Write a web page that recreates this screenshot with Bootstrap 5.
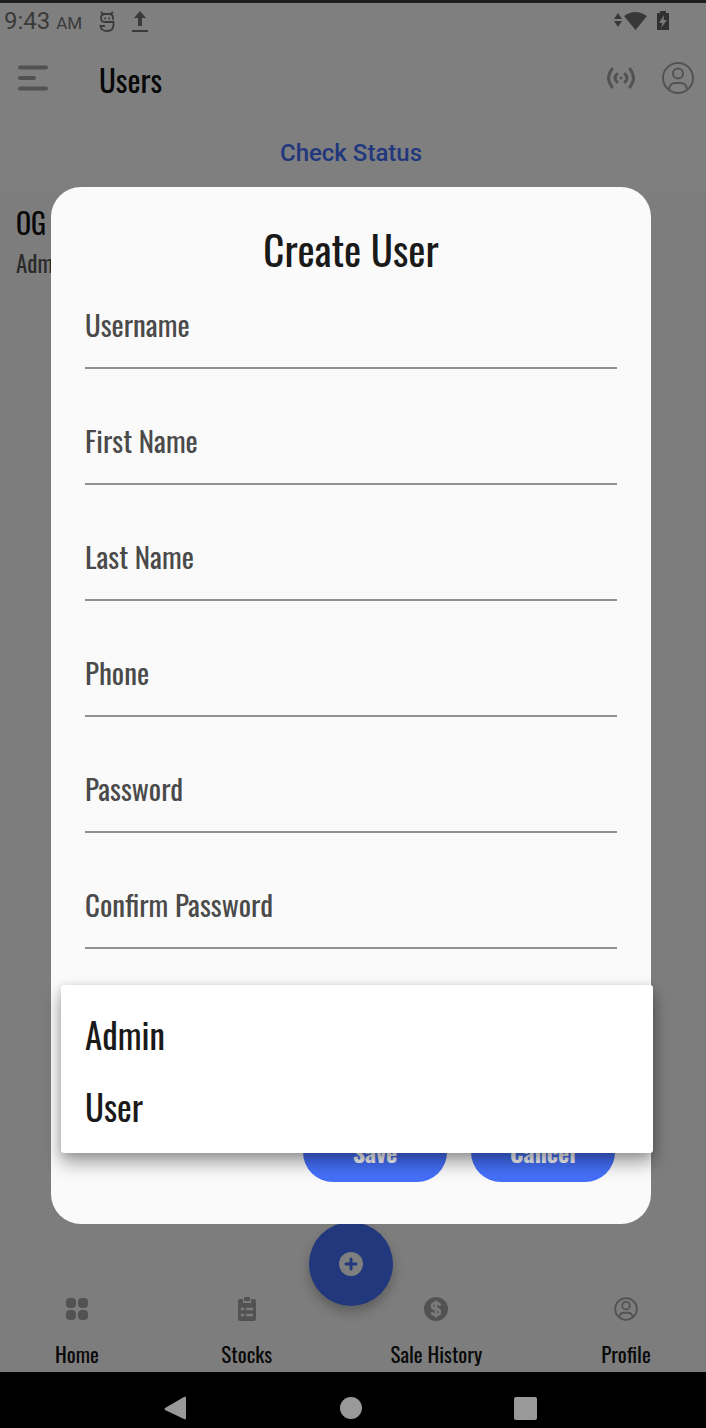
<!DOCTYPE html>
<html lang="en">
<head>
<meta charset="utf-8">
<meta name="viewport" content="width=device-width, initial-scale=1">
<title>Users</title>
<link href="https://cdn.jsdelivr.net/npm/bootstrap@5.3.0/dist/css/bootstrap.min.css" rel="stylesheet">
<style>
  :root { --brand: #4570fa; --ink: #1a1a1a; --muted: #a4a4a4; --signal: #707070; }
  body { font-family: Oswald, "Liberation Sans Narrow", "DejaVu Sans Condensed", sans-serif; color: #111; background: #000; }
  .roboto { font-family: Roboto, sans-serif; }
  .app { background: #fafafa; }
  .bars { background: #fff; }
  .status { border-top: 3px solid #3c3c3c; height: 40px; padding: 0 36px 0 4px; color: #757575; }
  .clock { font-size: 24px; line-height: 36px; }
  .clock small { font-size: 17px; }
  .appbar { height: 77px; padding: 0 12px 2px 18px; color: var(--muted); }
  .appbar h1 { font-size: 31px; line-height: 40px; margin: 3px 0 0 51px; color: #111; }
  .appbar a { color: inherit; margin-left: 27px; }
  .check { height: 75px; padding: 18px 4px 0 0; }
  .check .btn { color: var(--brand); font: 500 24px/36px Roboto, sans-serif; }
  .person { padding: 11px 16px; }
  .person-name { font-size: 28px; line-height: 40px; }
  .person-role { font-size: 23px; line-height: 40px; color: #555; }
  .fab { width: 84px; height: 84px; background: var(--brand); border: 0; box-shadow: 0 6px 12px rgba(0,0,0,.25); margin-right: 4px; }
  .tabs { height: 84px; margin-top: -18px; padding: 9px 54px 0 51px; }
  .tabs a { color: #111; font-size: 21px; line-height: 30px; gap: 18px; min-width: 52px; }
  .tabs svg { color: var(--muted); }
  .scrim { background: rgba(0,0,0,.5); padding: 39px 55px 0 51px; }
  .dialog { background: #fafafa; border-radius: 30px; padding: 34px 34px 42px; }
  .dialog h2 { font-size: 41px; line-height: 56px; margin-bottom: 29px; color: var(--ink); }
  .field { margin-bottom: 53px; }
  .field label { font-size: 29px; line-height: 36px; color: #4a4a4a; }
  .field input { height: 27px; border: 0; border-bottom: 2px solid #909090; border-radius: 0; background: transparent; padding: 0; }
  .role { margin-bottom: 60px; }
  .role-toggle { height: 60px; }
  .role .dropdown-menu { top: -17px; left: -24px; right: -36px; padding: 12px 0; border: 0; border-radius: 3px; box-shadow: 0 10px 18px rgba(0,0,0,.35), 0 2px 10px rgba(0,0,0,.15); }
  .role .dropdown-item { height: 72px; padding: 2px 24px 0; font-size: 35px; color: var(--ink); }
  .actions { gap: 24px; padding-right: 2px; }
  .actions .btn { width: 144px; height: 60px; border: 0; background: var(--brand); color: #fff; font-size: 24px; font-weight: 700; }
  .sysnav { height: 56px; padding: 24px 4px 0 0; gap: 151px; }
  .sysnav .btn { color: #999; width: 24px; }
</style>
</head>
<body>
<div class="d-flex flex-column min-vh-100">
  <div class="app position-relative flex-grow-1 d-flex flex-column">
    <header class="bars">
      <div class="status roboto d-flex align-items-center">
        <span class="clock">9:43 <small>AM</small></span>
        <svg class="ms-3" width="18" height="22" viewBox="0 0 18 22" fill="none" stroke="currentColor" stroke-width="1.800"><path d="M3 1l2 2M15 1l-2 2M15 9V7q0-4-4-4H7Q3 3 3 7t4 4h8.500v3q0 6-6.500 6-6 0-6.500-5H7"/><path d="M6.500 7.500H8M10.500 7.500H12"/></svg>
        <svg class="ms-3" width="16" height="22" viewBox="0 0 16 22" fill="currentColor"><path d="M8 0l6 7h-4v8H6V7H2zM0 19h16v2H0z"/></svg>
        <svg class="ms-auto" width="34" height="22" viewBox="0 0 34 22" fill="#707070"><path d="M0 8l4-6 4 6zM0 10h8l-4 6zM10 5Q21-3 33 5L21.500 19z"/></svg>
        <svg class="ms-2" width="14" height="22" viewBox="0 0 14 22"><path fill="#606060" d="M1 2h3V0h6v2h3v17H1z"/><path fill="#f4f4f4" d="M8 4l-5 8h3.500L5 17l6-8H7.500z"/></svg>
      </div>
      <div class="appbar d-flex align-items-center">
        <button class="btn p-0 border-0" aria-label="Menu"><svg class="d-block" width="30" height="26" viewBox="0 0 30 26" stroke="#a4a4a4" stroke-width="4" stroke-linecap="round"><path d="M2 2.500h26M2 13h14M2 23.500h26"/></svg></button>
        <h1 class="fw-normal">Users</h1>
        <svg class="ms-auto" width="28" height="24" viewBox="0 0 28 24" fill="none" stroke="currentColor" stroke-width="3" stroke-linecap="round"><path d="M5 3Q-2 12 5 21M23 3q7 9 0 18M10 8q-4 4 0 8M18 8q4 4 0 8M14 12v.1"/></svg>
        <a href="#" aria-label="Profile"><svg class="d-block" width="32" height="32" viewBox="0 0 32 32" fill="none" stroke="currentColor" stroke-width="2"><circle cx="16" cy="16" r="15"/><circle cx="16" cy="11.500" r="5"/><path d="M7 27q1-6 6-6h6q5 0 6 6"/></svg></a>
      </div>
      <div class="check text-center"><button class="btn p-0 border-0">Check Status</button></div>
    </header>
    <main class="person flex-grow-1">
      <div class="person-name">OG</div>
      <div class="person-role">Admin</div>
    </main>
    <button class="fab rounded-circle align-self-center flex-shrink-0 d-flex align-items-center justify-content-center" aria-label="Add user"><svg width="24" height="24" viewBox="0 0 24 24"><circle cx="12" cy="12" r="12" fill="#fff"/><path d="M12 7v10M7 12h10" stroke="#4570fa" stroke-width="3" stroke-linecap="round"/></svg></button>
    <nav class="tabs d-flex justify-content-between">
      <a class="d-flex flex-column align-items-center text-decoration-none" href="#"><svg width="24" height="24" viewBox="0 0 24 24" fill="currentColor"><rect x="1" y="1" width="10" height="10" rx="4"/><rect x="13" y="1" width="10" height="10" rx="4"/><rect x="1" y="13" width="10" height="10" rx="4"/><rect x="13" y="13" width="10" height="10" rx="4"/></svg>Home</a>
      <a class="d-flex flex-column align-items-center text-decoration-none" href="#"><svg width="24" height="24" viewBox="0 0 24 24" fill="currentColor"><path d="M5 2h3v4h8V2h3q2 0 2 2v18q0 2-2 2H5q-2 0-2-2V4q0-2 2-2z"/><rect x="9" y="0" width="6" height="4" rx="1"/><path d="M6 12h3M11 12h7M6 18h3M11 18h7" stroke="#f4f4f4" stroke-width="2.500"/></svg>Stocks</a>
      <a class="d-flex flex-column align-items-center text-decoration-none" href="#"><svg width="24" height="24" viewBox="0 0 24 24"><circle cx="12" cy="12" r="12" fill="currentColor"/><path d="M16.500 8.500Q15 6 12 6 8 6 8 9t4 3 4 3-4 3q-3 0-4.500-2.500M12 3.500v17" fill="none" stroke="#f4f4f4" stroke-width="2.600"/></svg>Sale History</a>
      <a class="d-flex flex-column align-items-center text-decoration-none" href="#"><svg width="24" height="24" viewBox="0 0 32 32" fill="none" stroke="currentColor" stroke-width="2.400"><circle cx="16" cy="16" r="14.500"/><circle cx="16" cy="11.500" r="5"/><path d="M7 27q1-6 6-6h6q5 0 6 6"/></svg>Profile</a>
    </nav>

    <div class="scrim position-absolute top-0 start-0 w-100 h-100 d-flex align-items-center">
      <form class="dialog w-100" role="dialog" aria-labelledby="dialogTitle">
        <h2 class="text-center fw-normal" id="dialogTitle">Create User</h2>
        <div class="field"><label class="d-block" for="username">Username</label><input class="d-block w-100" id="username" type="text"></div>
        <div class="field"><label class="d-block" for="first">First Name</label><input class="d-block w-100" id="first" type="text"></div>
        <div class="field"><label class="d-block" for="last">Last Name</label><input class="d-block w-100" id="last" type="text"></div>
        <div class="field"><label class="d-block" for="phone">Phone</label><input class="d-block w-100" id="phone" type="tel"></div>
        <div class="field"><label class="d-block" for="password">Password</label><input class="d-block w-100" id="password" type="password"></div>
        <div class="field"><label class="d-block" for="confirm">Confirm Password</label><input class="d-block w-100" id="confirm" type="password"></div>
        <div class="role position-relative">
          <button class="role-toggle btn w-100 border-0" type="button" aria-label="Role" aria-expanded="true"></button>
          <ul class="dropdown-menu show">
            <li><button class="dropdown-item d-flex align-items-center" type="button">Admin</button></li>
            <li><button class="dropdown-item d-flex align-items-center" type="button">User</button></li>
          </ul>
        </div>
        <div class="actions d-flex justify-content-end">
          <button class="btn rounded-pill" type="button">Save</button>
          <button class="btn rounded-pill" type="button">Cancel</button>
        </div>
      </form>
    </div>
  </div>
  <footer class="sysnav d-flex justify-content-center">
    <button class="btn p-0 border-0 d-flex align-items-start" aria-label="Back"><svg width="24" height="26" viewBox="0 0 24 26" fill="currentColor"><path d="M1 12L20 1q2-1 2 1v20q0 2-2 1L1 14q-1-1 0-2z"/></svg></button>
    <button class="btn p-0 border-0 d-flex align-items-start" aria-label="Home"><svg width="24" height="26" viewBox="0 0 24 26" fill="currentColor"><circle cx="12" cy="12" r="11"/></svg></button>
    <button class="btn p-0 border-0 d-flex align-items-start" aria-label="Recents"><svg width="24" height="26" viewBox="0 0 24 26" fill="currentColor"><rect x="0" y="1" width="23" height="23" rx="2"/></svg></button>
  </footer>
</div>
<script src="https://cdn.jsdelivr.net/npm/bootstrap@5.3.0/dist/js/bootstrap.bundle.min.js"></script>
</body>
</html>
